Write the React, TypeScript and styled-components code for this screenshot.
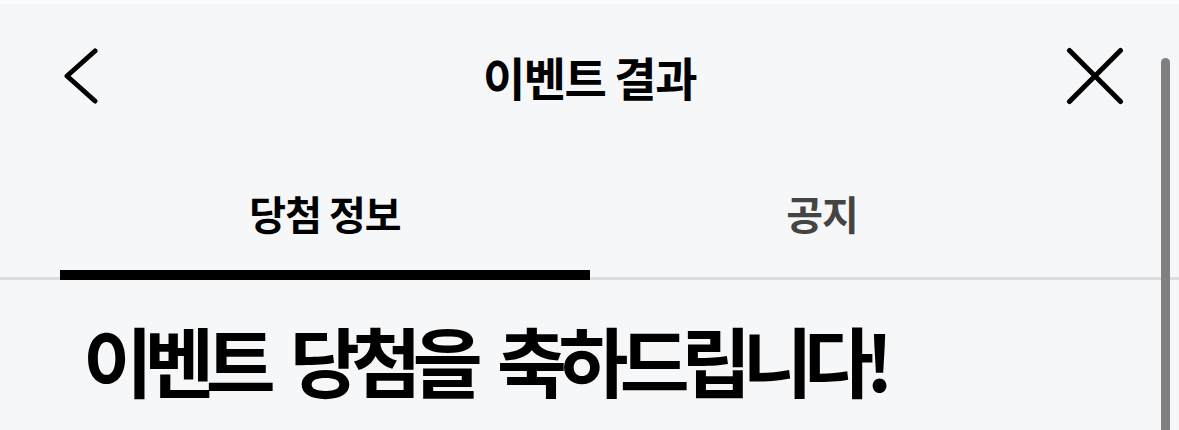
import React from "react";
import styled, { createGlobalStyle } from "styled-components";

const GlobalStyle = createGlobalStyle`
  html, body {
    margin: 0;
    padding: 0;
    background: #f6f7f9;
  }
  body {
    font-family: "Noto Sans CJK KR", "Noto Sans", sans-serif;
    color: #000;
  }
`;

const Page = styled.div`
  position: relative;
  width: 1179px;
  height: 430px;
  overflow: hidden;
  background: #f6f7f9;
`;

const TopStrip = styled.div`
  height: 4px;
  background: #fbfbfb;
`;

const Header = styled.header`
  display: grid;
  grid-template-columns: 1fr auto 1fr;
  align-items: center;
  height: 144px;
  padding: 0 55px;
`;

const IconButton = styled.button<{ align: "start" | "end"; inset?: number }>`
  justify-self: ${({ align }) => align};
  display: flex;
  margin-left: ${({ inset = 0 }) => inset}px;
  padding: 0;
  border: 0;
  background: none;
  cursor: pointer;
`;

const Title = styled.h1`
  margin: 0;
  font-size: 46px;
  font-weight: 700;
  letter-spacing: -1.5px;
`;

const TabBar = styled.nav`
  display: flex;
  height: 132px;
  padding: 0 60px;
  border-bottom: 3px solid #dcdde0;
  box-sizing: border-box;
`;

const Tab = styled.div<{ active?: boolean; width: number }>`
  position: relative;
  display: flex;
  align-items: center;
  justify-content: center;
  width: ${({ width }) => width}px;
  font-size: 40px;
  font-weight: 700;
  letter-spacing: -1px;
  color: ${({ active }) => (active ? "#000" : "#444")};

  &::after {
    content: "";
    display: ${({ active }) => (active ? "block" : "none")};
    position: absolute;
    left: 0;
    right: 0;
    bottom: -3px;
    height: 10px;
    background: #000;
  }
`;

const Content = styled.section`
  padding: 30px 0 0 83px;
`;

const Heading = styled.h2`
  margin: 0;
  font-size: 76px;
  font-weight: 700;
  letter-spacing: -8.5px;
  word-spacing: 14px;
  line-height: 1.3;
`;

const Lead = styled.p`
  margin: 24px 0 0;
  font-size: 34px;
  color: #9a9a9a;
`;

const ScrollThumb = styled.div`
  position: absolute;
  top: 58px;
  right: 9px;
  width: 9px;
  height: 600px;
  border-radius: 5px;
  background: #808080;
`;

export default function App() {
  return (
    <>
      <GlobalStyle />
      <Page>
        <TopStrip />
        <Header>
          <IconButton align="start" inset={9} aria-label="뒤로">
            <svg width="34" height="56" viewBox="0 0 34 56" fill="none">
              <polyline
                points="31,3 3,28 31,53"
                stroke="#000"
                strokeWidth="5"
                strokeLinecap="round"
                strokeLinejoin="round"
              />
            </svg>
          </IconButton>
          <Title>이벤트 결과</Title>
          <IconButton align="end" aria-label="닫기">
            <svg width="58" height="58" viewBox="0 0 58 58" fill="none">
              <path
                d="M3.5 3.5 L54.5 54.5 M54.5 3.5 L3.5 54.5"
                stroke="#000"
                strokeWidth="5"
                strokeLinecap="round"
              />
            </svg>
          </IconButton>
        </Header>
        <TabBar>
          <Tab active width={530}>당첨 정보</Tab>
          <Tab width={464}>공지</Tab>
        </TabBar>
        <Content>
          <Heading>이벤트 당첨을 축하드립니다!</Heading>
          <Lead>참여해 주셔서 감사합니다. 당첨 내역을 확인해 주세요.</Lead>
        </Content>
        <ScrollThumb />
      </Page>
    </>
  );
}
